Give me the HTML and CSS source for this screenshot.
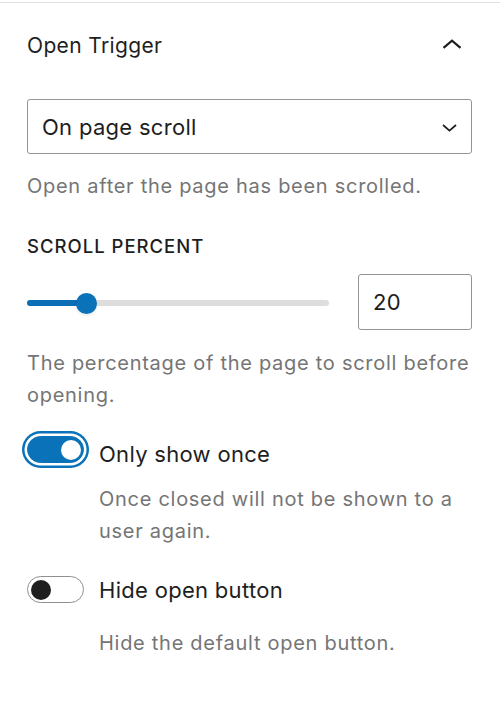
FILE: index.html
```html
<!DOCTYPE html>
<html lang="en">
<head>
<meta charset="utf-8">
<title>Open Trigger</title>
<link rel="stylesheet" href="styles.css">
</head>
<body>
<div class="panel">
  <div class="panel-header">
    <h2 class="panel-title">Open Trigger</h2>
    <svg class="chevron-up" width="20" height="10" viewBox="0 0 20 10" aria-hidden="true"><polyline points="1.5,8.8 10,1.6 18.5,8.8" fill="none" stroke="#1e1e1e" stroke-width="2.2"/></svg>
  </div>

  <div class="select">
    <span class="select-value">On page scroll</span>
    <svg class="chevron-down" width="15" height="8" viewBox="0 0 15 8" aria-hidden="true"><polyline points="1,1 7.5,6.6 14,1" fill="none" stroke="#1e1e1e" stroke-width="1.7"/></svg>
  </div>
  <p class="help help-select">Open after the page has been scrolled.</p>

  <div class="field-label">Scroll percent</div>
  <div class="range-row">
    <div class="range">
      <div class="rail"></div>
      <div class="track" style="width:19.5%"></div>
      <div class="thumb" style="left:19.5%"></div>
    </div>
    <div class="number-input">20</div>
  </div>
  <p class="help help-range">The percentage of the page to scroll before opening.</p>

  <div class="toggle-row toggle-row-first">
    <span class="toggle is-checked is-focused"><span class="toggle-thumb"></span></span>
    <span class="toggle-label">Only show once</span>
  </div>
  <p class="help toggle-help toggle-help-first">Once closed will not be shown to a user again.</p>

  <div class="toggle-row toggle-row-second">
    <span class="toggle"><span class="toggle-thumb"></span></span>
    <span class="toggle-label">Hide open button</span>
  </div>
  <p class="help toggle-help toggle-help-second">Hide the default open button.</p>
</div>
</body>
</html>
```

FILE: styles.css
```css
* { box-sizing: border-box; }

html, body {
  margin: 0;
  background: #ffffff;
}

body {
  padding-top: 2px;
  font-family: Inter, "Noto Sans", "Liberation Sans", sans-serif;
  color: #1e1e1e;
}

.panel {
  border-top: 1px solid #e0e0e0;
  padding: 0 28px 0 27px;
}

.panel-header {
  display: flex;
  align-items: center;
  justify-content: space-between;
  margin-top: 30px;
  height: 26px;
}

.panel-title {
  margin: 0;
  font-size: 21px;
  line-height: 26px;
  font-weight: 400;
  letter-spacing: 0.35px;
}

.chevron-up {
  display: block;
  margin-right: 10px;
  margin-top: -4px;
}

.select {
  margin-top: 40px;
  height: 55px;
  border: 1px solid #949494;
  border-radius: 3px;
  display: flex;
  align-items: center;
  justify-content: space-between;
  padding: 0 14px 0 14px;
}

.select-value {
  font-size: 22px;
  line-height: 28px;
  letter-spacing: 0.3px;
}

.chevron-down {
  display: block;
  margin-top: 2px;
}

.help {
  margin: 0;
  color: #757575;
  font-size: 20px;
  line-height: 32px;
  letter-spacing: 0.72px;
}

.help-select { margin-top: 16px; }

.field-label {
  margin-top: 31.5px;
  font-size: 18.5px;
  line-height: 24px;
  font-weight: 500;
  text-transform: uppercase;
  letter-spacing: 1px;
}

.range-row {
  margin-top: 16px;
  display: flex;
  align-items: center;
  gap: 29px;
}

.range {
  position: relative;
  flex: 1;
  height: 56px;
}

.rail {
  position: absolute;
  left: 0;
  right: 0;
  top: 26px;
  height: 6px;
  border-radius: 3px;
  background: #dddddd;
}

.track {
  position: absolute;
  left: 0;
  top: 26px;
  height: 6px;
  border-radius: 3px;
  background: #0a6fb5;
}

.thumb {
  position: absolute;
  top: 19px;
  width: 21px;
  height: 21px;
  margin-left: -10px;
  border-radius: 50%;
  background: #0a72b8;
  box-shadow: 0 2px 3px rgba(0, 0, 0, 0.08);
}

.number-input {
  width: 114px;
  height: 56px;
  border: 1px solid #949494;
  border-radius: 3px;
  padding-left: 14px;
  font-size: 22px;
  line-height: 54px;
  letter-spacing: 0.3px;
}

.help-range { margin-top: 17.7px; }

.toggle-row {
  display: flex;
  align-items: flex-start;
  gap: 15px;
}

.toggle-row-first { margin-top: 25.3px; }
.toggle-row-second { margin-top: 29.3px; }

.toggle {
  position: relative;
  display: block;
  flex: none;
  width: 57px;
  height: 27px;
  border: 1.5px solid #8f8f8f;
  border-radius: 14px;
  background: #ffffff;
}

.toggle-thumb {
  position: absolute;
  top: 50%;
  left: 2.5px;
  width: 20px;
  height: 20px;
  margin-top: -10px;
  border-radius: 50%;
  background: #1e1e1e;
}

.toggle.is-checked {
  background: #0a72b8;
  border-color: #0a72b8;
}

.toggle.is-checked .toggle-thumb {
  left: auto;
  right: 2.5px;
  background: #ffffff;
}

.toggle.is-focused {
  box-shadow: 0 0 0 2.5px #ffffff, 0 0 0 5px #0a72b8;
}

.toggle-label {
  font-size: 22px;
  line-height: 28px;
  letter-spacing: 0.3px;
}

.toggle-row-first .toggle-label { margin-top: 4px; }
.toggle-row-second .toggle-label { margin-top: 0; }

.toggle-help { margin-left: 72px; }
.toggle-help-first { margin-top: 14.7px; }
.toggle-help-second { margin-top: 22.7px; }
```
